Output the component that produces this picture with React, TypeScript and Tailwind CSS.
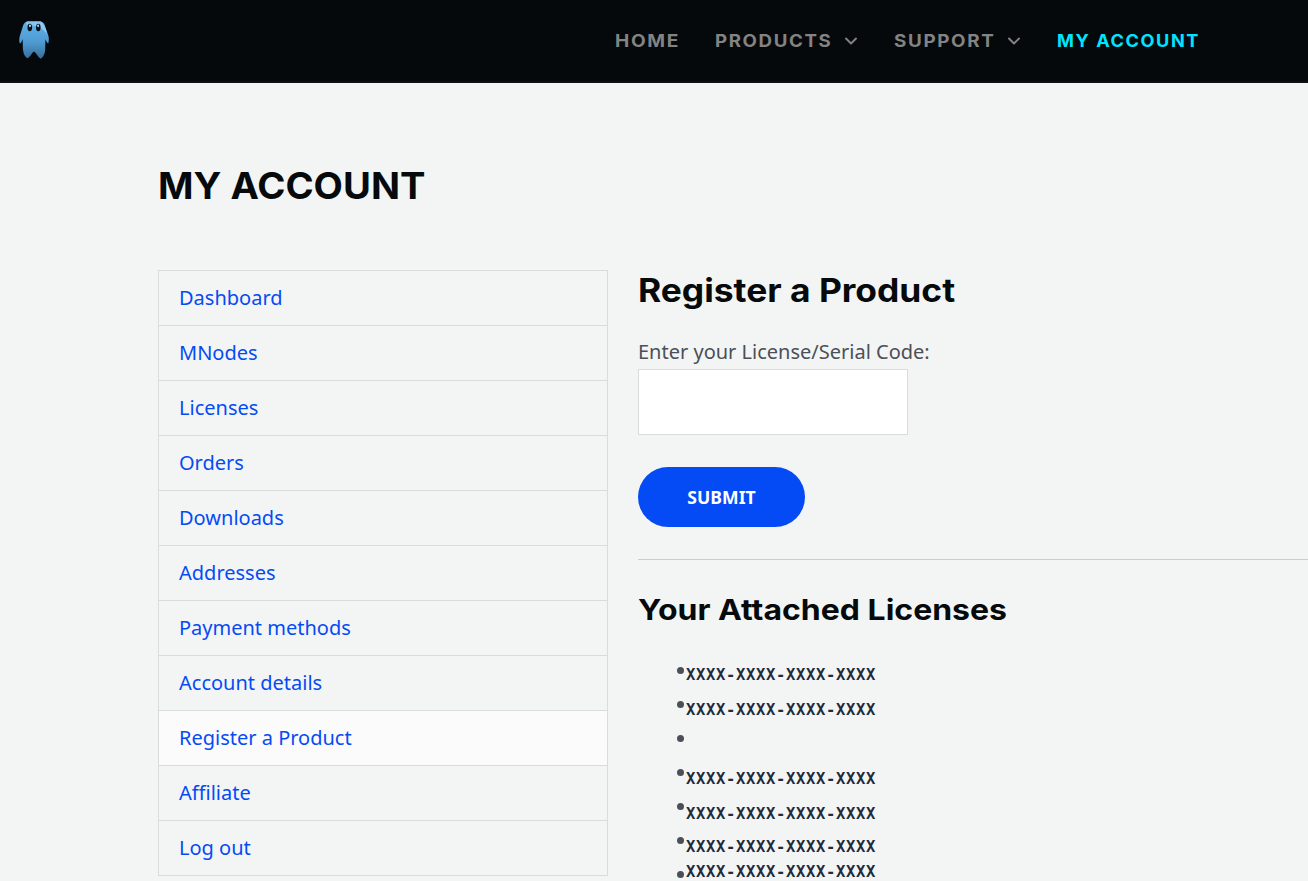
import clsx from "clsx";
import { ChevronDown } from "lucide-react";

const headingFont =
  "w-fit origin-left whitespace-nowrap font-['Inter',sans-serif] font-bold text-[#060a0c]";

const navItems = [
  { label: "HOME", width: "w-[100px]", stretch: "scale-x-[1.105]" },
  {
    label: "PRODUCTS",
    width: "w-[179px]",
    stretch: "scale-x-[1.08]",
    dropdown: true,
  },
  {
    label: "SUPPORT",
    width: "w-[163px]",
    stretch: "scale-x-[1.09]",
    dropdown: true,
  },
  {
    label: "MY ACCOUNT",
    width: "w-[143px]",
    stretch: "scale-x-[1.05]",
    active: true,
  },
];

const accountLinks = [
  "Dashboard",
  "MNodes",
  "Licenses",
  "Orders",
  "Downloads",
  "Addresses",
  "Payment methods",
  "Account details",
  "Register a Product",
  "Affiliate",
  "Log out",
];

const licenses = [
  { code: "XXXX-XXXX-XXXX-XXXX", height: "h-[35px]" },
  { code: "XXXX-XXXX-XXXX-XXXX", height: "h-[69px]" },
  { code: "XXXX-XXXX-XXXX-XXXX", height: "h-[35px]" },
  { code: "XXXX-XXXX-XXXX-XXXX", height: "h-[33px]" },
  { code: "XXXX-XXXX-XXXX-XXXX", height: "h-[25px]" },
  { code: "XXXX-XXXX-XXXX-XXXX", height: "h-[20px]" },
];

const Logo = () => (
  <svg width="32" height="40" viewBox="0 0 32 40">
    <defs>
      <linearGradient id="body" x1="0" y1="0" x2="0" y2="1">
        <stop offset="0" stopColor="#5fb2ea" />
        <stop offset="0.55" stopColor="#4f9bd2" />
        <stop offset="1" stopColor="#396d98" />
      </linearGradient>
      <linearGradient id="shine" x1="0" y1="0" x2="1" y2="1">
        <stop offset="0" stopColor="#8fcdf5" />
        <stop offset="1" stopColor="#b4dcf5" />
      </linearGradient>
    </defs>
    <path
      d="M9.500 1.300h13c2.500.5 3.800 2.500 4.700 5.200l3.300 9.800c.5 2.600.5 5.200-.3 7.100-1.200-.3-1.900-2.200-2.700-4.100-.3 4-.1 8-.4 11.200-.4 3.500-1.800 6.700-4.300 8.200-2.600-1-3.700-4.200-5-5.700L16 31.500l-1.800 1.500c-1.300 1.800-2.600 4.500-5 5.300-2.400-1.500-3.800-4.600-4.200-8.200-.3-3.400-.1-7.200-.4-11.200-.7 2.200-1.500 4.200-2.700 4.600-.9-1.900-.7-4.500-.2-7.100l3.100-9.800C5.700 3.800 7 1.800 9.500 1.300z"
      fill="url(#body)"
    />
    <path
      d="M9.500 1.500h12.700c2.300.5 3.600 2.400 4.600 5.200l2.600 7.700C25 8 19 5.500 8 4.200c-.7-.2.2-2.400 1.500-2.700z"
      fill="url(#shine)"
      opacity="0.7"
    />
    <ellipse cx="11.800" cy="7.500" rx="2.300" ry="3.800" fill="#071019" />
    <ellipse cx="20.300" cy="7.500" rx="2.300" ry="3.800" fill="#071019" />
    <ellipse cx="12" cy="5.800" rx="0.900" ry="1.400" fill="#cde5f4" />
    <ellipse cx="20.100" cy="5.800" rx="0.900" ry="1.400" fill="#cde5f4" />
  </svg>
);

const Header = () => (
  <header className="flex h-[83px] justify-between border-b-2 border-[#0f0f14] bg-[#05090c]">
    <a href="#" className="mt-5 ml-[18px]">
      <Logo />
    </a>
    <nav className="mr-[108px] flex h-[82px] items-center font-['Inter',sans-serif] text-[17.300px] font-bold tracking-[1.500px]">
      {navItems.map((item) => (
        <a
          key={item.label}
          href="#"
          className={clsx(
            "flex items-center whitespace-nowrap",
            item.width,
            item.active ? "text-[#00e5ff]" : "text-[#838383]",
          )}
        >
          <span className={clsx("origin-left", item.stretch)}>
            {item.label}
          </span>
          {item.dropdown && (
            <ChevronDown className="ml-[17px]" size={20} strokeWidth={2.3} />
          )}
        </a>
      ))}
    </nav>
  </header>
);

const Sidebar = () => (
  <ul className="w-[450px] shrink-0 border border-[#dadcdb]">
    {accountLinks.map((link) => (
      <li
        key={link}
        className={clsx(
          "h-[55px] border-b border-[#dadcdb] pl-5 leading-[54px] last:h-[54px] last:border-b-0",
          link === "Register a Product" && "bg-[#fbfbfb]",
        )}
      >
        <a href="#" className="text-[#054bf5]">
          {link}
        </a>
      </li>
    ))}
  </ul>
);

const RegisterProduct = () => (
  <section className="w-[670px] shrink-0">
    <h2
      className={clsx(
        headingFont,
        "h-[67px] scale-x-[1.105] text-[32px] leading-[42px]",
      )}
    >
      Register a Product
    </h2>
    <form>
      <label htmlFor="code" className="block h-8 leading-[30px]">
        Enter your License/Serial Code:
      </label>
      <input
        id="code"
        className="block h-[66px] w-[270px] border border-[#dadcdb] bg-white px-3 outline-none"
      />
      <button
        type="button"
        className="mt-8 block h-[60px] w-[167px] rounded-full bg-[#054bf5] text-[17.600px] font-bold text-white"
      >
        SUBMIT
      </button>
    </form>
    <hr className="mt-8 border-[#c9cdcc]" />
    <h3
      className={clsx(
        headingFont,
        "mt-[29px] scale-x-[1.103] text-[29px] leading-[42px]",
      )}
    >
      Your Attached Licenses
    </h3>
    <div className="mt-[22px] flex pl-[39px]">
      <div className="flex w-[9px] flex-col pt-[14px]">
        {Array.from({ length: 7 }, (_, i) => (
          <div key={i} className="h-[34px]">
            <div className="size-[7px] rounded-full bg-[#4b4f58]" />
          </div>
        ))}
      </div>
      <ul className="pt-[12px] font-['DejaVu_Sans_Mono',monospace] text-[15.500px] leading-5 font-bold tracking-[0.670px] text-[#1f2a3a]">
        {licenses.map((license, i) => (
          <li key={i} className={license.height}>
            {license.code}
          </li>
        ))}
      </ul>
    </div>
  </section>
);

export default function App() {
  return (
    <div className="h-[881px] overflow-hidden bg-[#f3f5f4] font-['Noto_Sans',sans-serif] text-[20px] text-[#4b4f58]">
      <Header />
      <main className="pt-[77px] pl-[158px]">
        <h1
          className={clsx(
            headingFont,
            "h-[110px] scale-x-[1.03] text-[37px] leading-[52px]",
          )}
        >
          MY ACCOUNT
        </h1>
        <div className="flex items-start gap-[30px]">
          <Sidebar />
          <RegisterProduct />
        </div>
      </main>
    </div>
  );
}
